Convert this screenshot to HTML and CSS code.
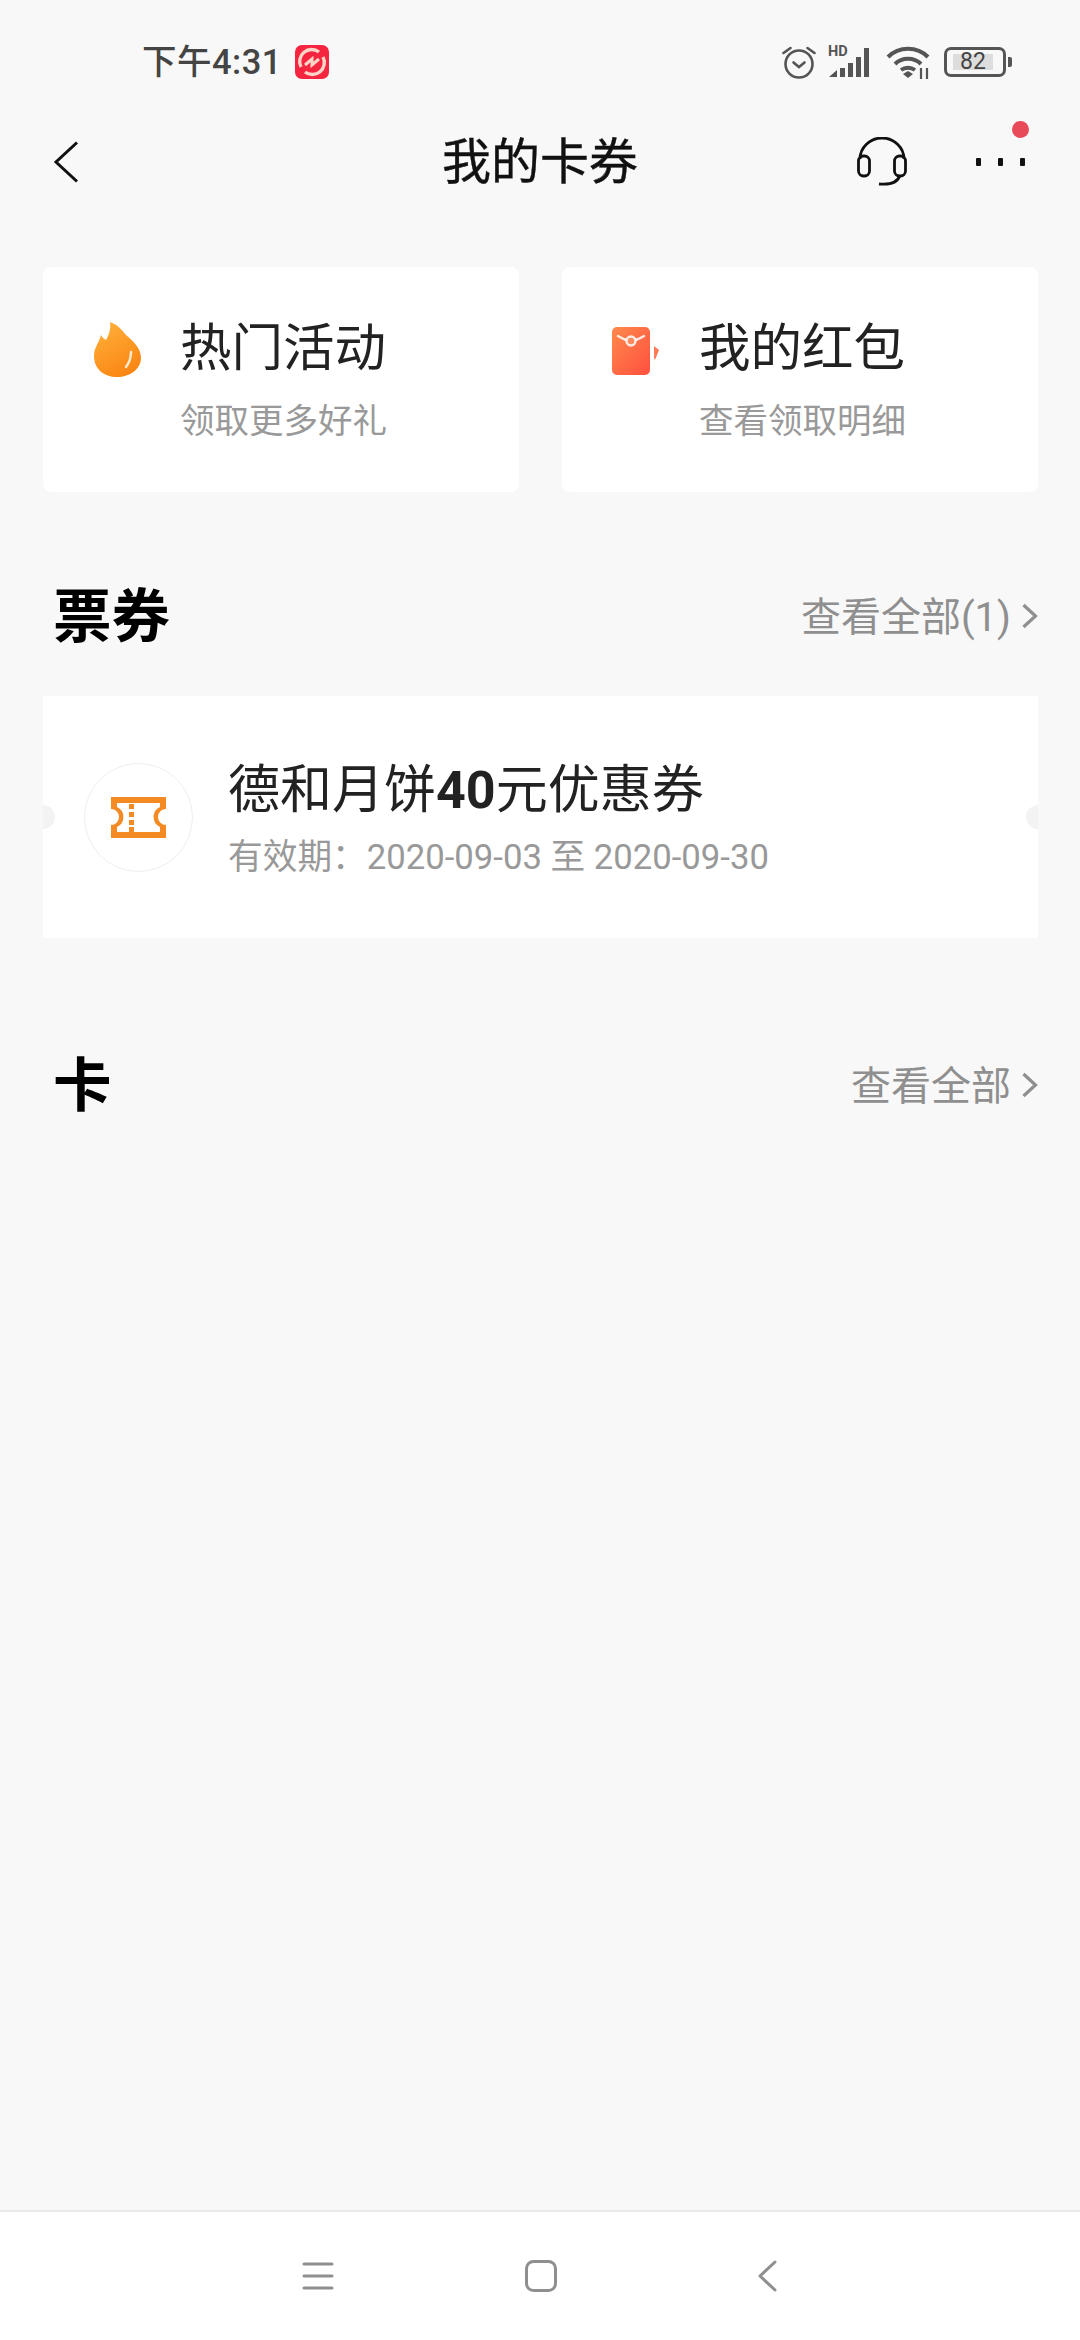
FILE: index.html
```html
<!DOCTYPE html>
<html lang="zh-CN">

<head>
    <meta charset="UTF-8">
    <meta name="viewport" content="width=device-width, initial-scale=1.0">
    <title>我的卡券</title>
    <link rel="stylesheet" href="styles.css">
</head>

<body>
    <div class="page">
        <!-- status bar -->
        <div class="status-bar">
            <span class="status-time">下午4:31</span>
            <svg class="app-badge" viewBox="0 0 34 34">
                <rect width="34" height="34" rx="7" fill="#f5243f" />
                <path d="M6 22a12 12 0 0 1 18-15M28 12a12 12 0 0 1-18 15" fill="none" stroke="#fcd5c8" stroke-width="3.400" />
                <path d="M10 20l7-6v6l7-6" fill="none" stroke="#fcd5c8" stroke-width="3" />
            </svg>
            <div class="status-icons">
                <svg class="ic-alarm" viewBox="0 0 34 34" fill="none" stroke="#555" stroke-linecap="round">
                    <circle cx="17" cy="19" r="13.5" stroke-width="2.6" />
                    <path d="M11.500 17.500l5.500 4.500 5.500-4.500" stroke-width="2.6" />
                    <path d="M1.500 8l7-5M25.500 3l7 5" stroke-width="2.6" />
                </svg>
                <div class="signal">
                    <span class="hd-text">HD</span>
                    <svg class="ic-signal" viewBox="0 0 42 32">
                        <path d="M1 31l8-7v7zM12 22h5v9h-5zM20 17h5v14h-5zM28 11h5v20h-5zM36 2h5v29h-5z" fill="#555" />
                    </svg>
                </div>
                <svg class="ic-wifi" viewBox="0 0 44 34" fill="none" stroke="#555" stroke-width="4">
                    <path d="M2 12C13 1 31 1 42 12M9 19c7-7 19-7 26 0M15 25c4-3 10-3 14 0" />
                    <path d="M17 29l5-3 5 3-5 4z" fill="#555" stroke="none" />
                    <path d="M35 23v11M41 23v11" stroke-width="2.200" />
                </svg>
                <div class="battery">
                    <div class="battery-body"><span class="battery-level">82</span></div>
                    <div class="battery-cap"></div>
                </div>
            </div>
        </div>

        <!-- nav bar -->
        <div class="nav-bar">
            <svg class="nav-back" viewBox="0 0 26 42" fill="none" stroke="#111" stroke-width="3">
                <path d="M24 1.500L3 21l21 19.500" />
            </svg>
            <h1 class="nav-title">我的卡券</h1>
            <div class="nav-actions">
                <svg class="nav-service" viewBox="0 0 50 50" fill="none" stroke="#111" stroke-width="2.800">
                    <path d="M3 22a22 21 0 0 1 44 0" />
                    <rect x="1.500" y="19" width="11" height="20" rx="5" />
                    <rect x="37.500" y="19" width="11" height="20" rx="5" />
                    <path d="M43 38c-2 7-10 10-21 9" />
                </svg>
                <div class="nav-more">
                    <span class="more-dot"></span><span class="more-dot"></span><span class="more-dot"></span>
                    <span class="red-dot"></span>
                </div>
            </div>
        </div>

        <!-- two shortcut cards -->
        <div class="shortcut-row">
            <div class="shortcut-card">
                <svg class="shortcut-icon" viewBox="0 0 50 58">
                    <defs>
                        <linearGradient id="flame" x1="0.2" y1="0" x2="0.7" y2="1">
                            <stop offset="0" stop-color="#ffb03a" />
                            <stop offset="1" stop-color="#fb8412" />
                        </linearGradient>
                    </defs>
                    <path d="M17 0c8 3 12 8 16 13 7 6 15 13 15 23 0 11-11 19-24 19S1 47 1 34c0-9 5-13 7-21 1 2 3 4 5 5 3-5 5-11 4-18z" fill="url(#flame)" />
                    <path d="M38 30c0 6-2 11-5 15" fill="none" stroke="#ffe9cc" stroke-width="2.500" stroke-linecap="round" />
                </svg>
                <div class="shortcut-text">
                    <div class="shortcut-title">热门活动</div>
                    <div class="shortcut-sub">领取更多好礼</div>
                </div>
            </div>
            <div class="shortcut-card">
                <svg class="shortcut-icon" viewBox="0 0 50 58">
                    <defs>
                        <linearGradient id="packet" x1="0" y1="0" x2="1" y2="1">
                            <stop offset="0" stop-color="#ff8a4c" />
                            <stop offset="1" stop-color="#ff4f3f" />
                        </linearGradient>
                    </defs>
                    <rect x="0" y="5" width="38" height="48" rx="5" fill="url(#packet)" />
                    <path d="M6 14c5 3 9 5 13 5s8-2 13-5" fill="none" stroke="#fff" stroke-opacity="0.85" stroke-width="2.400" stroke-linecap="round" />
                    <circle cx="19" cy="19" r="4.500" fill="#ff8a5c" stroke="#fff" stroke-opacity="0.85" stroke-width="2.400" />
                    <path d="M42 24l5 4-4 10-1-2z" fill="#ff7a55" />
                </svg>
                <div class="shortcut-text">
                    <div class="shortcut-title">我的红包</div>
                    <div class="shortcut-sub">查看领取明细</div>
                </div>
            </div>
        </div>

        <!-- tickets -->
        <div class="section-head head-tickets">
            <h2 class="section-title">票券</h2>
            <div class="section-link">查看全部(1)
                <svg class="link-arrow" viewBox="0 0 16 26" fill="none" stroke="#8f8f8f" stroke-width="3.200">
                    <path d="M1.500 2l12 11-12 11" />
                </svg>
            </div>
        </div>
        <div class="ticket-card">
            <div class="ticket-logo">
                <svg class="ticket-icon" viewBox="0 0 55 41">
                    <path d="M0 0h55v12a8 8 0 0 0 0 16v13H0V28a8 8 0 0 0 0-16z" fill="#f38a24" />
                    <path d="M6 6h43v4a11 11 0 0 0 0 20v5H6v-5a11 11 0 0 0 0-20z" fill="#fff" />
                    <path d="M18 7h5v5h-5zM18 15h5v5h-5zM18 23h5v5h-5zM18 30h5v5h-5z" fill="#f38a24" />
                </svg>
            </div>
            <div class="ticket-text">
                <div class="ticket-title">德和月饼<b>40</b>元优惠券</div>
                <div class="ticket-date">有效期：2020-09-03 至 2020-09-30</div>
            </div>
        </div>

        <!-- cards -->
        <div class="section-head head-cards">
            <h2 class="section-title">卡</h2>
            <div class="section-link">查看全部
                <svg class="link-arrow" viewBox="0 0 16 26" fill="none" stroke="#8f8f8f" stroke-width="3.200">
                    <path d="M1.500 2l12 11-12 11" />
                </svg>
            </div>
        </div>

        <div class="spacer"></div>

        <!-- android nav -->
        <div class="bottom-nav">
            <svg class="sys-menu" viewBox="0 0 32 30" fill="none" stroke="#8f8f8f" stroke-width="3" stroke-linecap="round">
                <path d="M2 3h28M2 15h28M2 27h28" />
            </svg>
            <svg class="sys-home" viewBox="0 0 32 32" fill="none" stroke="#8f8f8f" stroke-width="3">
                <rect x="1.500" y="1.500" width="29" height="29" rx="7" />
            </svg>
            <svg class="sys-back" viewBox="0 0 20 32" fill="none" stroke="#8f8f8f" stroke-width="3" stroke-linecap="round" stroke-linejoin="round">
                <path d="M18 2L3 16l15 14" />
            </svg>
        </div>
    </div>
</body>

</html>
```

FILE: styles.css
```css
* {
    box-sizing: border-box;
}

body {
    margin: 0;
    padding: 0;
    background: #f8f8f8;
    font-family: Roboto, "Noto Sans CJK SC", sans-serif;
}

.page {
    display: flex;
    flex-direction: column;
    width: 1080px;
    height: 2340px;
    overflow: hidden;
}

/* Status bar */
.status-bar {
    display: flex;
    align-items: center;
    height: 124px;
    padding: 0 68px 0 142px;
}

.status-time {
    padding-bottom: 6px;
    font-size: 34.5px;
    font-weight: 500;
    color: #444;
    letter-spacing: 0.5px;
}

.app-badge {
    width: 34px;
    height: 34px;
    margin-left: 13px;
}

.status-icons {
    display: flex;
    align-items: center;
    margin-left: auto;
}

.ic-alarm {
    width: 34px;
    height: 34px;
}

.signal {
    position: relative;
    width: 42px;
    height: 32px;
    margin-left: 12px;
}

.ic-signal {
    display: block;
    width: 42px;
    height: 32px;
}

.hd-text {
    position: absolute;
    top: -2px;
    left: 0;
    font-size: 14.5px;
    line-height: 15px;
    font-weight: 700;
    color: #555;
}

.ic-wifi {
    width: 44px;
    height: 34px;
    margin-left: 16px;
}

.battery {
    display: flex;
    align-items: center;
    margin-left: 14px;
}

.battery-body {
    width: 62px;
    height: 30px;
    padding: 4px 5px;
    border: 3px solid #555;
    border-radius: 7px;
}

.battery-level {
    display: block;
    width: 40px;
    height: 16px;
    margin-left: 1px;
    background: #ddd;
    font-size: 23px;
    line-height: 16px;
    text-align: center;
    color: #444;
}

.battery-cap {
    width: 4px;
    height: 10px;
    margin-left: 2px;
    background: #555;
    border-radius: 0 2px 2px 0;
}

/* Nav bar */
.nav-bar {
    position: relative;
    display: flex;
    align-items: center;
    justify-content: space-between;
    height: 76px;
    padding: 0 55px 0 53px;
}

.nav-back {
    width: 26px;
    height: 42px;
}

.nav-title {
    position: absolute;
    left: 0;
    right: 0;
    margin: 0;
    padding-bottom: 9px;
    font-size: 49px;
    font-weight: 400;
    text-align: center;
    color: #111;
    -webkit-text-stroke: 0.4px #111;
}

.nav-actions {
    display: flex;
    align-items: center;
    gap: 69px;
}

.nav-service {
    width: 50px;
    height: 50px;
}

.nav-more {
    position: relative;
    display: flex;
    gap: 17px;
}

.more-dot {
    width: 5px;
    height: 8px;
    background: #111;
    border-radius: 1px;
}

.red-dot {
    position: absolute;
    top: -37px;
    right: -4px;
    width: 17px;
    height: 17px;
    background: #e84a5a;
    border-radius: 50%;
}

/* Shortcut cards */
.shortcut-row {
    display: flex;
    justify-content: space-between;
    padding: 0 42px 0 43px;
    margin-top: 67px;
}

.shortcut-card {
    display: flex;
    width: 476px;
    height: 225px;
    padding: 52px 0 0 50px;
    background: #fff;
    border-radius: 8px;
}

.shortcut-icon {
    width: 50px;
    height: 58px;
    margin-top: 3px;
}

.shortcut-text {
    margin-left: 37px;
}

.shortcut-title {
    margin-top: -6px;
    font-size: 51.5px;
    line-height: 72px;
    color: #222;
}

.shortcut-sub {
    margin-top: 11px;
    font-size: 34.5px;
    line-height: 50px;
    color: #999;
}

/* Section headers */
.section-head {
    display: flex;
    align-items: center;
    justify-content: space-between;
    height: 80px;
    padding: 0 42px 0 53px;
}

.head-tickets {
    margin-top: 82px;
}

.head-cards {
    margin-top: 105px;
}

.section-title {
    margin: 0;
    padding-bottom: 6px;
    font-size: 58.5px;
    font-weight: 700;
    color: #000;
}

.section-link {
    display: flex;
    align-items: center;
    font-size: 40px;
    color: #8f8f8f;
}

.link-arrow {
    width: 16px;
    height: 26px;
    margin-top: 3px;
    margin-left: 11px;
}

/* Ticket card */
.ticket-card {
    position: relative;
    display: flex;
    align-items: center;
    height: 242px;
    margin: 42px 42px 0 43px;
    padding: 0 0 0 41px;
    background: #fff;
    overflow: hidden;
}

/* the two punched notches */
.ticket-card::before,
.ticket-card::after {
    content: "";
    position: absolute;
    top: 109px;
    width: 24px;
    height: 24px;
    background: #f3f3f3;
    border-radius: 50%;
}

.ticket-card::before {
    left: -12px;
}

.ticket-card::after {
    right: -12px;
}

.ticket-logo {
    display: flex;
    align-items: center;
    justify-content: center;
    width: 109px;
    height: 109px;
    border: 1px solid #eee;
    border-radius: 50%;
}

.ticket-icon {
    width: 55px;
    height: 41px;
}

.ticket-text {
    margin-left: 35px;
    margin-top: 5px;
}

.ticket-title {
    font-size: 52px;
    line-height: 68px;
    color: #222;
}

.ticket-title b {
    font-weight: 700;
}

.ticket-date {
    margin-top: 7px;
    font-size: 34.7px;
    line-height: 50px;
    color: #999;
}

.spacer {
    flex: 1;
}

/* System nav */
.bottom-nav {
    display: flex;
    align-items: center;
    height: 130px;
    padding-left: 302px;
    background: #fff;
    border-top: 2px solid #e8e8e8;
}

.sys-menu {
    width: 32px;
    height: 30px;
}

.sys-home {
    width: 32px;
    height: 32px;
    margin-left: 191px;
}

.sys-back {
    width: 20px;
    height: 32px;
    margin-left: 200px;
}
```
